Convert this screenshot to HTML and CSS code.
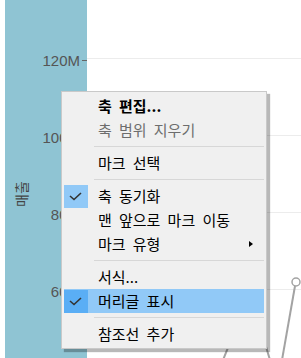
FILE: index.html
```html
<!DOCTYPE html>
<html lang="ko">
<head>
  <meta charset="UTF-8" />
  <title>축 메뉴</title>
  <link rel="stylesheet" href="styles.css">
</head>
<body>
  <div class="chart">
    <div class="axis">
      <div class="axis-title">매출</div>
      <div class="ticks">
        <div class="tick"><span>120M</span><i class="mark"></i></div>
        <div class="tick"><span>100M</span><i class="mark"></i></div>
        <div class="tick"><span>80M</span><i class="mark"></i></div>
        <div class="tick"><span>60M</span><i class="mark"></i></div>
      </div>
    </div>
    <div class="plot">
      <svg width="214" height="358" viewBox="0 0 214 358">
        <g stroke="#ececec" stroke-width="1">
          <line x1="0" y1="58.5" x2="214" y2="58.5" />
          <line x1="0" y1="135.5" x2="214" y2="135.5" />
          <line x1="0" y1="212.5" x2="214" y2="212.5" />
          <line x1="0" y1="289.5" x2="214" y2="289.5" />
        </g>
        <g stroke="#a3a3a3" stroke-width="2" fill="none">
          <line x1="153" y1="318" x2="136" y2="360" />
          <line x1="171" y1="320" x2="183" y2="360" />
          <line x1="208" y1="286" x2="195" y2="360" />
          <circle cx="209" cy="282" r="4" fill="#fff" stroke-width="1.5" />
        </g>
      </svg>
    </div>
  </div>

  <div class="menu">
    <div class="item bold"><span class="check"></span><span class="label">축 편집...</span></div>
    <div class="item disabled"><span class="check"></span><span class="label">축 범위 지우기</span></div>
    <div class="sep"></div>
    <div class="item"><span class="check"></span><span class="label">마크 선택</span></div>
    <div class="sep"></div>
    <div class="item">
      <span class="check on">
        <svg width="24" height="23" viewBox="0 0 24 23"><polyline points="6,11 10,14.5 17,8" fill="none" stroke="#333" stroke-width="1.6" /></svg>
      </span>
      <span class="label">축 동기화</span>
    </div>
    <div class="item"><span class="check"></span><span class="label">맨 앞으로 마크 이동</span></div>
    <div class="item"><span class="check"></span><span class="label">마크 유형</span><i class="arrow"></i></div>
    <div class="sep"></div>
    <div class="item"><span class="check"></span><span class="label">서식...</span></div>
    <div class="item hover">
      <span class="check on">
        <svg width="24" height="23" viewBox="0 0 24 23"><polyline points="6,11 10,14.5 17,8" fill="none" stroke="#333" stroke-width="1.6" /></svg>
      </span>
      <span class="label">머리글 표시</span>
    </div>
    <div class="sep"></div>
    <div class="item"><span class="check"></span><span class="label">참조선 추가</span></div>
  </div>
</body>
</html>
```

FILE: styles.css
```css
* {
  box-sizing: border-box;
}

body {
  margin: 0;
  width: 301px;
  height: 358px;
  overflow: hidden;
  position: relative;
  background: #fff;
  font-family: 'Liberation Sans', 'Noto Sans CJK KR', sans-serif;
}

.chart {
  display: flex;
  height: 358px;
  padding-left: 5px;
}

.axis {
  width: 82px;
  background: #8fc4d3;
  position: relative;
  flex-shrink: 0;
}

.axis-title {
  position: absolute;
  left: 3px;
  top: 186px;
  transform: rotate(-90deg);
  font-family: 'Noto Sans CJK KR', sans-serif;
  font-size: 14px;
  line-height: 16px;
  color: #444;
}

.ticks {
  padding-top: 50px;
  display: flex;
  flex-direction: column;
  gap: 57px;
}

.tick {
  height: 20px;
  display: flex;
  justify-content: flex-end;
  align-items: center;
  font-size: 15px;
  color: #555;
}

.mark {
  width: 5px;
  height: 1px;
  margin-left: 2px;
  background: #666;
}

.plot {
  flex: 1;
}

.plot svg {
  display: block;
}

/* context menu */
.menu {
  position: absolute;
  left: 61px;
  top: 91px;
  width: 206px;
  padding: 2px;
  background: #f0f0f0;
  border: 1px solid #c9c9c9;
  box-shadow: 3px 3px 1px rgba(0, 0, 0, 0.28);
  font-family: 'Noto Sans CJK KR', sans-serif;
  font-size: 15px;
  color: #000;
}

.item {
  display: flex;
  align-items: center;
  height: 24px;
  line-height: 24px;
  word-spacing: 3px;
}

.check {
  width: 24px;
  height: 23px;
  margin-right: 10px;
  flex-shrink: 0;
}

.check.on {
  background: #91c9f7;
}

.check svg {
  display: block;
}

.bold {
  font-weight: bold;
}

.disabled {
  color: #6d6d6d;
}

.hover {
  background: #91c9f7;
}

.hover .check.on {
  background: #5aaef5;
}

.arrow {
  margin-left: auto;
  margin-right: 11px;
  width: 0;
  height: 0;
  border-left: 4px solid #000;
  border-top: 3.5px solid transparent;
  border-bottom: 3.5px solid transparent;
}

.sep {
  height: 1px;
  margin: 4px 0 4px 30px;
  background: #d7d7d7;
}
```
